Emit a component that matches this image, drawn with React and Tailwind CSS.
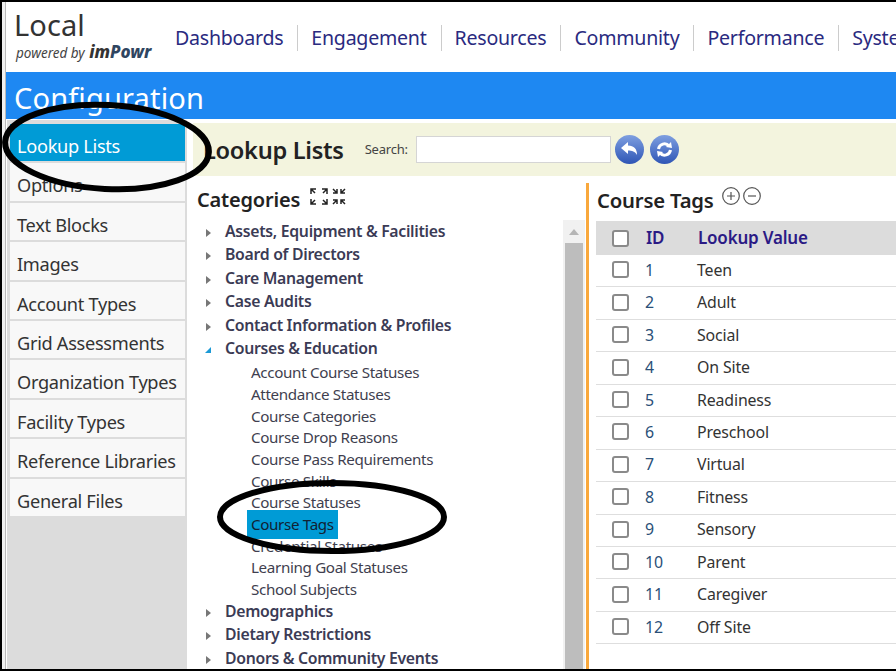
import React from "react";

const font = { fontFamily: '"Noto Sans","Open Sans",sans-serif' };
const nav = ["Dashboards", "Engagement", "Resources", "Community", "Performance", "System"];
const side = ["Lookup Lists", "Options", "Text Blocks", "Images", "Account Types", "Grid Assessments", "Organization Types", "Facility Types", "Reference Libraries", "General Files"];
const before = ["Assets, Equipment & Facilities", "Board of Directors", "Care Management", "Case Audits", "Contact Information & Profiles"];
const subs = ["Account Course Statuses", "Attendance Statuses", "Course Categories", "Course Drop Reasons", "Course Pass Requirements", "Course Skills", "Course Statuses", "Course Tags", "Credential Statuses", "Learning Goal Statuses", "School Subjects"];
const after = ["Demographics", "Dietary Restrictions", "Donors & Community Events"];
const rows = ["Teen", "Adult", "Social", "On Site", "Readiness", "Preschool", "Virtual", "Fitness", "Sensory", "Parent", "Caregiver", "Off Site"];

function Tri({ open }) {
  return (
    <svg width="8" height="10" viewBox="0 0 8 10" className="shrink-0 mt-[6px]">
      {open ? <path d="M1 8 L7 8 L7 2 Z" fill="#1c9ad6" /> : <path d="M2 1 L7 5 L2 9 Z" fill="#777" />}
    </svg>
  );
}

function Top({ label, open }) {
  return (
    <div className="flex h-[23.4px] pl-[11px] items-start">
      <Tri open={open} />
      <span className="ml-[13px] text-[15.8px] leading-[19px] font-semibold text-[#3b3b55] tracking-[-0.3px] whitespace-nowrap">{label}</span>
    </div>
  );
}

function Box() {
  return <span className="block w-[17px] h-[17px] rounded-[3px] border-2 border-[#8a8a8a] bg-white" />;
}

function Round({ children }) {
  return (
    <span className="w-[29px] h-[29px] rounded-full bg-gradient-to-b from-[#7f9fe0] to-[#2f55b5] flex items-center justify-center">
      {children}
    </span>
  );
}

export default function App() {
  return (
    <div style={font} className="relative w-[896px] h-[671px] overflow-hidden bg-white border-t-2 border-b-2 border-l-2 border-black">
      <div className="h-full border-l-[3px] border-[#f0f0f0]">
        <div className="h-full border-l border-[#b9b9b9] flex flex-col">
          <header className="h-[70px] shrink-0 flex items-start pl-[8px]">
            <div className="w-[161px] shrink-0 pt-[6px]">
              <div className="text-[29px] leading-[34px] text-[#333] tracking-[0.1px]">Local</div>
              <div className="text-[13.5px] leading-[18px] text-[#444] italic whitespace-nowrap mt-[1px] pl-[2px]">
                powered by <span className="font-extrabold text-[17px] text-[#333] ml-[1px]">im<span className="text-[#2f4560]">Powr</span></span>
              </div>
            </div>
            <nav className="flex pt-[23px] whitespace-nowrap">
              {nav.map((n, i) => (
                <span key={n} className={`text-[19.6px] leading-[26px] text-[#2a2a80] tracking-[-0.25px] pr-[14px] mr-[13px] ${i < nav.length - 1 ? "border-r border-[#ccc]" : ""}`}>{n}</span>
              ))}
            </nav>
          </header>

          <div className="h-[47px] shrink-0 bg-[#1e88f2] text-white text-[29px] leading-[51px] pl-[8px] tracking-[0.15px] overflow-hidden">Configuration</div>

          <div className="flex flex-1 min-h-0 border-t border-white">
            <aside className="w-[180px] ml-[1px] shrink-0 bg-[#dcdcdc] pl-[3px] pr-[2px] pt-[4px] flex flex-col gap-[2px]">
              {side.map((s, i) => (
                <div key={s} className={`h-[37.4px] shrink-0 flex items-center pl-[7px] pt-[8px] text-[18.2px] tracking-[-0.3px] whitespace-nowrap ${i === 0 ? "bg-[#009bd6] text-white" : "bg-[#f8f8f8] text-[#333]"}`}>{s}</div>
              ))}
            </aside>

            <main className="flex-1 min-w-0 pl-[6px] pt-[3px] flex flex-col">
              <div className="h-[53px] shrink-0 bg-[#f3f4de] flex items-center pl-[10px]">
                <span className="text-[23.6px] font-semibold text-[#222] tracking-[-0.3px] whitespace-nowrap pt-[3px]">Lookup Lists</span>
                <span className="ml-[21px] text-[13px] text-[#444] tracking-[-0.2px]">Search:</span>
                <span className="ml-[8px] w-[195px] h-[27px] bg-white border border-[#d5d5d5]" />
                <span className="ml-[4px] flex gap-[6px]">
                  <Round>
                    <svg width="19" height="15" viewBox="0 0 19 15"><path d="M1 6 L8 0 L8 3.5 C14 3.5 17 7 17 13 C15 9.5 12 8.5 8 8.5 L8 12 Z" fill="#fff" /></svg>
                  </Round>
                  <Round>
                    <svg width="19" height="19" viewBox="0 0 19 19" fill="none" stroke="#fff" strokeWidth="3"><path d="M3.5 9 A6 6 0 0 1 14 6" /><path d="M15.5 10 A6 6 0 0 1 5 13" /><path d="M11 7 L17 8 L16 2 Z" fill="#fff" stroke="none" /><path d="M8 12 L2 11 L3 17 Z" fill="#fff" stroke="none" /></svg>
                  </Round>
                </span>
              </div>

              <div className="flex flex-1 min-h-0">
                <section className="w-[393px] shrink-0 relative">
                  <div className="flex items-start pl-[4px] pt-[9px] h-[46px]">
                    <span className="text-[20px] leading-[30px] font-semibold text-[#222] tracking-[-0.2px]">Categories</span>
                    <svg width="40" height="18" viewBox="0 0 40 18" className="ml-[10px] mt-[3px]" fill="none" stroke="#222" strokeWidth="1.5">
                      <path d="M1 6V1H6M1 1L5 5M12 1H17V6M17 1L13 5M1 11V16H6M1 16L5 12M17 11V16H12M17 16L13 12" />
                      <path d="M27 1V5H23M27 5L23 1M31 1V5H35M31 5L35 1M27 16V12H23M27 12L23 16M31 16V12H35M31 12L35 16" />
                    </svg>
                  </div>
                  <div>
                    {before.map((b) => <Top key={b} label={b} />)}
                    <Top label="Courses & Education" open />
                    <div className="pl-[58px] pb-[2px] -mt-[1px]">
                      {subs.map((s) => (
                        <div key={s} className="h-[21.7px] flex items-center">
                          <span className={`text-[15.2px] tracking-[-0.35px] whitespace-nowrap ${s === "Course Tags" ? "bg-[#009bd6] text-[#123] h-[29px] leading-[29px] px-[4px] -ml-[4px]" : "text-[#3f3f4f] leading-[22px]"}`}>{s}</span>
                        </div>
                      ))}
                    </div>
                    {after.map((b) => <Top key={b} label={b} />)}
                  </div>
                  <div className="absolute right-[1px] top-[44px] bottom-0 w-[22px] bg-[#f1f1f1] pt-[23px] px-[2px]">
                    <svg width="10" height="6" viewBox="0 0 10 6" className="absolute top-[9px] left-[6px]"><path d="M0 6 L5 0 L10 6 Z" fill="#b5b5b5" /></svg>
                    <div className="h-full bg-[#bdbdbd]" />
                  </div>
                </section>

                <section className="flex-1 min-w-0 border-l-[3px] border-[#f9a83c] mt-[7px] pl-[7px]">
                  <div className="flex items-start h-[38px] pt-[2px]">
                    <span className="text-[20.3px] leading-[30px] font-semibold text-[#222] tracking-[-0.2px] pl-[1px] whitespace-nowrap">Course Tags</span>
                    <svg width="42" height="20" viewBox="0 0 42 20" className="ml-[7px] mt-[1px]" fill="none" stroke="#555" strokeWidth="1.2">
                      <circle cx="10" cy="10" r="8.3" /><path d="M6 10H14M10 6V14" />
                      <circle cx="31" cy="10" r="8.3" /><path d="M27 10H35" />
                    </svg>
                  </div>
                  <div className="h-[34px] bg-[#dcdcdc] flex items-center text-[#2b1a85] font-semibold text-[17px] tracking-[-0.2px]">
                    <span className="pl-[16px] w-[49px]"><Box /></span>
                    <span className="w-[53px] pl-[1px]">ID</span>
                    <span className="whitespace-nowrap">Lookup Value</span>
                  </div>
                  {rows.map((r, i) => (
                    <div key={r} className="h-[32.45px] flex items-center border-b border-[#dedede] text-[15.9px] tracking-[-0.15px]">
                      <span className="pl-[16px] w-[49px] -mt-[2px]"><Box /></span>
                      <span className="w-[52px] text-[#2a4f78]">{i + 1}</span>
                      <span className="text-[#333]">{r}</span>
                    </div>
                  ))}
                </section>
              </div>
            </main>
          </div>
        </div>
      </div>

      <svg width="896" height="671" viewBox="0 0 896 671" className="absolute -left-[2px] -top-[2px] pointer-events-none" fill="none" stroke="#000">
        <ellipse cx="107" cy="147" rx="102" ry="42" strokeWidth="6" transform="rotate(3 107 147)" />
        <ellipse cx="332" cy="517" rx="112" ry="34" strokeWidth="6" />
      </svg>
    </div>
  );
}
